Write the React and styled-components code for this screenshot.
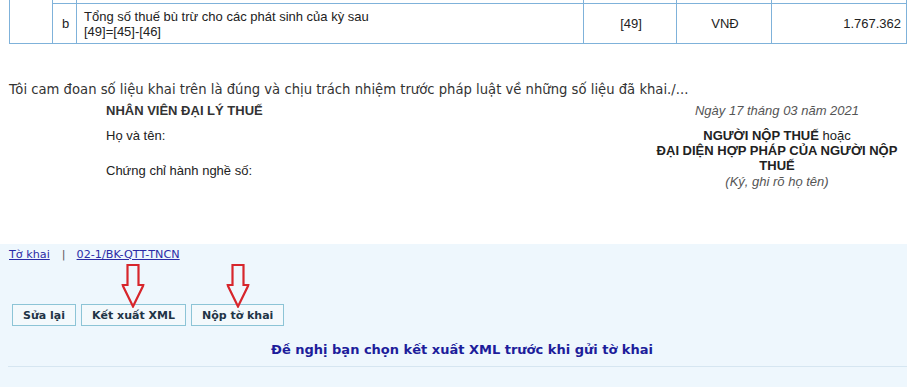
import React from 'react';
import styled, { createGlobalStyle } from 'styled-components';

const GlobalStyle = createGlobalStyle`
    html, body {
        margin: 0;
        padding: 0;
        background: #ffffff;
    }
    body {
        font-family: "Liberation Sans", Arial, sans-serif;
        color: #333333;
    }
`;

const buttons = [
    { label: 'Sửa lại' },
    { label: 'Kết xuất XML', arrow: true },
    { label: 'Nộp tờ khai', arrow: true }
];

const DownArrow = () => (
    <svg width="23" height="44" viewBox="0 0 23 44">
        <polygon
            points="6,1 17,1 17,21 22,21 11.5,42.5 1,21 6,21"
            fill="none"
            stroke="#d7262c"
            strokeWidth="2.2"
            strokeLinejoin="miter"
        />
    </svg>
);

const App = () => {
    return (
        <>
            <GlobalStyle />
            <StPage>
                <StTable>
                    <colgroup>
                        <col style={{ width: 43 }} />
                        <col style={{ width: 24 }} />
                        <col />
                        <col style={{ width: 93 }} />
                        <col style={{ width: 95 }} />
                        <col style={{ width: 135 }} />
                    </colgroup>
                    <tbody>
                        <tr>
                            <StCell rowSpan={2} />
                            <StStubCell />
                            <StStubCell />
                            <StStubCell />
                            <StStubCell />
                            <StStubCell />
                        </tr>
                        <tr>
                            <StCell $align="center">b</StCell>
                            <StCell $align="left">
                                Tổng số thuế bù trừ cho các phát sinh của kỳ sau
                                <br />
                                [49]=[45]-[46]
                            </StCell>
                            <StCell $align="center">[49]</StCell>
                            <StCell $align="center">VNĐ</StCell>
                            <StCell $align="right">1.767.362</StCell>
                        </tr>
                    </tbody>
                </StTable>

                <StPledge>
                    Tôi cam đoan số liệu khai trên là đúng và chịu trách nhiệm trước pháp luật về những số liệu đã khai./...
                </StPledge>

                <StSignBlock>
                    <StSignLeft>
                        <StSignTitle>NHÂN VIÊN ĐẠI LÝ THUẾ</StSignTitle>
                        <StSignField $gap={10}>Họ và tên:</StSignField>
                        <StSignField $gap={20}>Chứng chỉ hành nghề số:</StSignField>
                    </StSignLeft>
                    <StSignRight>
                        <StNote>Ngày 17 tháng 03 năm 2021</StNote>
                        <StSignerTitle>
                            NGƯỜI NỘP THUẾ <StNormal>hoặc</StNormal>
                            <br />
                            ĐẠI DIỆN HỢP PHÁP CỦA NGƯỜI NỘP THUẾ
                        </StSignerTitle>
                        <StNote>(Ký, ghi rõ họ tên)</StNote>
                    </StSignRight>
                </StSignBlock>

                <StPanel>
                    <StCrumbs>
                        <StLink href="#">Tờ khai</StLink>
                        <StSeparator>|</StSeparator>
                        <StLink href="#">02-1/BK-QTT-TNCN</StLink>
                    </StCrumbs>

                    <StButtonBar>
                        {buttons.map((b) => (
                            <StButtonSlot key={b.label}>
                                {b.arrow && (
                                    <StArrow>
                                        <DownArrow />
                                    </StArrow>
                                )}
                                <StButton type="button">{b.label}</StButton>
                            </StButtonSlot>
                        ))}
                    </StButtonBar>

                    <StMessage>Đề nghị bạn chọn kết xuất XML trước khi gửi tờ khai</StMessage>
                    <StRule />
                </StPanel>
            </StPage>
        </>
    );
};

export default App;

const StPage = styled.div`
    width: 907px;
    height: 387px;
    overflow: hidden;
    display: flex;
    flex-direction: column;
`;

const StTable = styled.table`
    margin-left: 9px;
    width: 898px;
    border-collapse: collapse;
    table-layout: fixed;
    font-family: "Liberation Sans", Arial, sans-serif;
    font-size: 13px;
    color: #222222;
`;

const StStubCell = styled.td`
    height: 3px;
    padding: 0;
    border-left: 1px solid #7fb2da;
    border-right: 1px solid #7fb2da;
    border-bottom: 1px solid #7fb2da;
`;

const StCell = styled.td`
    height: 39px;
    padding: 0 5px 0 7px;
    line-height: 15px;
    text-align: ${(props) => props.$align || 'left'};
    vertical-align: middle;
    border: 1px solid #7fb2da;
    border-top: none;
`;

const StPledge = styled.div`
    margin: 38px 0 0 9px;
    font-family: "DejaVu Sans", Verdana, sans-serif;
    font-size: 13.2px;
    line-height: 16px;
    color: #333333;
    white-space: nowrap;
`;

const StSignBlock = styled.div`
    display: flex;
    padding-left: 106px;
    margin-top: 5px;
    height: 141px;
    font-family: "Liberation Sans", Arial, sans-serif;
    font-size: 13px;
    line-height: 15px;
    color: #222222;
`;

const StSignLeft = styled.div`
    flex: 1;
    display: flex;
    flex-direction: column;
`;

const StSignTitle = styled.div`
    font-weight: bold;
    color: #333333;
`;

const StSignField = styled.div`
    margin-top: ${(props) => props.$gap}px;
`;

const StSignRight = styled.div`
    width: 256px;
    margin-right: 2px;
    text-align: center;
`;

const StNote = styled.div`
    font-style: italic;
    color: #555555;
`;

const StSignerTitle = styled.div`
    margin: 10px 0 1px;
    font-weight: bold;
    color: #222222;
`;

const StNormal = styled.span`
    font-weight: normal;
`;

const StPanel = styled.div`
    flex: 1;
    background-color: #eef7fd;
    padding-top: 2px;
`;

const StCrumbs = styled.div`
    display: flex;
    align-items: center;
    height: 16px;
    padding-left: 9px;
    font-family: "DejaVu Sans", Verdana, sans-serif;
    font-size: 11.2px;
`;

const StLink = styled.a`
    color: #2b2ba6;
    text-decoration: underline;
`;

const StSeparator = styled.span`
    margin: 0 11px 0 12px;
    color: #555555;
`;

const StButtonBar = styled.div`
    display: flex;
    gap: 5px;
    margin-top: 42px;
    padding-left: 12px;
`;

const StButtonSlot = styled.div`
    position: relative;
    display: flex;
`;

const StArrow = styled.div`
    position: absolute;
    left: 50%;
    bottom: 18px;
    transform: translateX(-50%);
    line-height: 0;
    pointer-events: none;
`;

const StButton = styled.button`
    height: 22px;
    padding: 0 10px;
    border: 1px solid #8cc4d6;
    background-color: #f3f9fc;
    font-family: "DejaVu Sans", Verdana, sans-serif;
    font-size: 11px;
    font-weight: bold;
    color: #1f3446;
    cursor: pointer;
`;

const StMessage = styled.div`
    margin-top: 16px;
    padding-left: 17px;
    text-align: center;
    font-family: "DejaVu Sans", Verdana, sans-serif;
    font-size: 13px;
    font-weight: bold;
    line-height: 16px;
    color: #1d1d9b;
`;

const StRule = styled.div`
    margin: 8px 0 0 8px;
    border-top: 1px solid #d6e6f1;
`;
